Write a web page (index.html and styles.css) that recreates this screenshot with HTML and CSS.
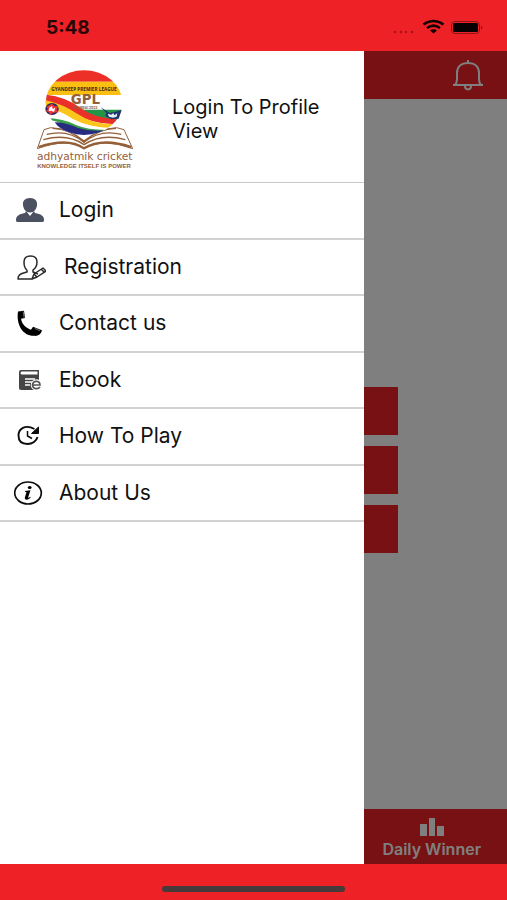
FILE: index.html
```html
<!DOCTYPE html>
<html lang="en">
<head>
<meta charset="utf-8">
<meta name="viewport" content="width=device-width, initial-scale=1">
<title>Adhyatmik Cricket</title>
<link rel="stylesheet" href="styles.css">
</head>
<body>
<div class="phone">
  <header class="status">
    <time class="clock">5:48</time>
    <svg class="status-icons" viewBox="0 0 92 20" aria-hidden="true">
      <g fill="#a01518"><circle cx="4" cy="14" r="1.2"/><circle cx="10" cy="14" r="1.2"/><circle cx="15" cy="14" r="1.2"/><circle cx="21" cy="14" r="1.2"/></g>
      <g fill="none" stroke="#120203" stroke-width="2.6"><path d="M32.500 6.500Q42.500-.5 52.500 6.500"/><path d="M36 10Q42.500 5.300 49 10"/></g>
      <path d="M39 12.500Q42.500 10 46 12.500L42.500 15.500Z" fill="#120203"/>
      <rect x="60.500" y="3.500" width="28" height="12" rx="3.500" fill="none" stroke="#8d1518"/>
      <rect x="62" y="5" width="25" height="9" rx="1.500" fill="#080101"/>
      <path d="M90 7.500v4q3-2 0-4Z" fill="#8d1518"/>
    </svg>
  </header>

  <main class="stage">
    <section class="app">
      <div class="topbar">
        <button class="bell" aria-label="Notifications">
          <svg viewBox="0 0 32 32" fill="none" stroke="#fff" stroke-width="2"><path d="M1 26H31M3 26Q5 24 5 20V14C5 8 9 4 16 4S27 8 27 14V20Q27 24 29 26M13 27c0 4.500 6 4.500 6 0M16 4V1"/></svg>
        </button>
      </div>
      <div class="choices"><div class="choice"></div><div class="choice"></div><div class="choice"></div></div>
      <nav class="tabs">
        <a class="tab" href="#winner">
          <svg viewBox="0 0 24 18" fill="#fff" aria-hidden="true"><path d="M0 6h7v12H0zM9 0h6v18H9zM17 8h7v10h-7z"/></svg>
          Daily Winner
        </a>
      </nav>
    </section>
    <div class="scrim"></div>

    <aside class="drawer">
      <div class="profile">
        <svg class="logo" viewBox="0 0 390 360" role="img" aria-label="Gyandeep Premier League">
          <defs><clipPath id="ball"><ellipse cx="192" cy="131" rx="115" ry="97"/></clipPath></defs>
          <g fill="#fff" stroke="#946039" stroke-width="4" stroke-linejoin="round">
            <path d="M92 206L72 212 52 269Q145 235 192 268Q245 235 338 269L312 212 290 206Q235 208 192 250Q150 207 92 206Z" stroke-width="3"/>
            <path d="M70 242Q142 222 192 257Q244 222 316 242M80 226Q145 210 192 250Q240 210 304 226M98 208Q150 210 192 246Q235 210 288 208" fill="none"/>
            <path d="M56 264Q145 235 192 268Q245 235 334 264" fill="none" stroke-width="7"/>
          </g>
          <g clip-path="url(#ball)">
            <path fill="#fff" d="M70 30h245v205H70z"/>
            <path fill="#ec3028" d="M70 30h245v38H70z"/>
            <path fill="#fbbf12" d="M70 68h245v40H70z"/>
            <path fill="#249447" d="M185 152h130v62Q250 211 192 158Z"/>
            <path fill="#fff" d="M170 149Q225 188 315 190V226Q220 210 145 170Z"/>
            <path fill="#e9302b" d="M72 106Q140 113 183 148Q233 185 315 180V195Q220 199 165 164Q125 139 72 130Z"/>
            <path fill="#fbc51b" d="M72 122Q129 134 173 165Q227 203 315 194V207Q222 213 159 181Q118 157 72 147Z"/>
            <path fill="#fff" d="M72 143Q124 155 157 179Q212 212 310 206V218Q220 221 158 194Q118 176 72 170Z"/>
            <path fill="#3b9e4a" d="M72 177Q130 177 170 199Q210 216 285 212L270 222Q180 225 132 196Q103 182 72 181Z"/>
            <path fill="#272b80" d="M104 190Q137 190 175 207Q217 220 270 213L240 235H140Z"/>
          </g>
          <g><ellipse cx="96" cy="150" rx="20" ry="18" fill="#25285f"/><path d="M79 143l17-9 9 8 9-2-4 13 7 7-17 1-9 7-6-10-9-1 8-6z" fill="#ea3439"/><path d="M88 146l8-5 2 9 8-4-4 13-8-4-8 2z" fill="#fff"/></g>
          <path d="M241 144l28 18 24-5 12-4-9 26-22 2-18-10 3-10z" fill="#20356d"/>
          <path d="M263 164l11 3 6-5 3 7 9-6-2 10-11 3-12-3z" fill="#e8eff5"/>
          <text class="league" x="192" y="95">GYANDEEP PREMIER LEAGUE</text>
          <text class="gpl" x="196" y="136">GPL</text>
          <text class="city" x="197" y="149">MUMBAI 2023</text>
          <text class="brand" x="194" y="303">adhyatmik cricket</text>
          <text class="motto" x="192" y="328">KNOWLEDGE ITSELF IS POWER</text>
        </svg>
        <a class="profile-link" href="#profile">Login To Profile View</a>
      </div>

      <nav class="menu">
        <a class="item" href="#login">
          <svg viewBox="0 0 32 32" fill="#4b5160" aria-hidden="true"><path d="M16 4c5 0 7.500 3 7 7-.3 4-3 7.500-7 7.500S9.300 15 9 11c-.5-4 2-7 7-7Z"/><path d="M12 17l4 5 4-5 1 2c6 1 9 3 9 7 0 2-1 2-2 2H4c-1 0-2 0-2-2 0-4 3-6 9-7Z"/></svg>
          Login
        </a>
        <a class="item item-wide" href="#registration">
          <svg viewBox="0 0 32 32" fill="none" stroke="#292929" stroke-width="1.500" stroke-linejoin="round" aria-hidden="true"><path d="M13 19c-3-2-3-5-3-8 0-4 2-6 6.500-6S23 7 23 11s-1 6-4 8v2l5 2M13 19v2c-6 2-9 2-9 7h14M18 28l2-5 9-6 3 3-9 6-5 2ZM20 23l3 3M27 18l3 3"/></svg>
          Registration
        </a>
        <a class="item" href="#contact">
          <svg viewBox="0 0 32 32" aria-hidden="true"><path d="M4 4.500l6-.8 1 7.300-4 .8c1 6 5 9 10 11l2-3 9 3.500c-1 4-4 6-8 5.500C9 29 2 18 4 4.500Z"/><path d="M9.200 4.600l.9 6.200M20.800 21.500l5.200 2.200" stroke="#999" stroke-width=".7"/></svg>
          Contact us
        </a>
        <a class="item" href="#ebook">
          <svg viewBox="0 0 32 32" aria-hidden="true"><path d="M7 6H25V26H7q-2 0-2-2V8q0-2 2-2Z" fill="#454545"/><path d="M7.500 7.500H23.500V10.500H7.500Q5.500 9 7.500 7.500Z" fill="#fff"/><path d="M11 15h10M11 18h7M11 21h5" stroke="#fff" stroke-width="1.300"/><circle cx="22.500" cy="21" r="5.800" fill="#fff"/><path d="M18.500 21H26C26 16.500 19.500 16 18.500 20.500c0 5 5.500 5 7.500 2.500" fill="none" stroke="#555" stroke-width="1.700"/></svg>
          Ebook
        </a>
        <a class="item" href="#how">
          <svg viewBox="0 0 32 32" fill="none" stroke="#0d0d0d" stroke-width="1.900" aria-hidden="true"><path d="M20.500 9C11 4 4.500 9 4.500 15.500S9 24 13.500 24c5 0 9-3 10-7"/><path d="M13.500 11v5l4.500 2.500" stroke-width="1.500"/><path d="M24.500 7v6.500h-7Z" fill="#0d0d0d" stroke-width="1"/></svg>
          How To Play
        </a>
        <a class="item" href="#about">
          <svg viewBox="0 0 32 32" aria-hidden="true"><ellipse cx="14" cy="16" rx="13.300" ry="11" fill="none" stroke="#0d0d0d" stroke-width="1.700"/><ellipse cx="15.700" cy="10.500" rx="1.900" ry="1.600"/><path d="M11 14l5.500-.7-2.500 7.500q1 .2 2.300-1l.5.500c-2 3-7 3.500-5.900 0l1.600-5-1.600-.5z"/></svg>
          About Us
        </a>
      </nav>
    </aside>
  </main>

  <footer class="home-area"><div class="home-bar"></div></footer>
</div>
</body>
</html>
```
FILE: styles.css
```css
* { box-sizing: border-box; }

body {
  margin: 0;
  font-family: Inter, "Open Sans", sans-serif;
  color: #111;
  background: #fff;
}

a { color: inherit; text-decoration: none; }

.phone {
  display: flex;
  flex-direction: column;
  min-height: 100vh;
}

.status {
  display: flex;
  align-items: center;
  justify-content: space-between;
  height: 51px;
  padding: 4px 24px 0 46px;
  background: #ee2226;
}

.clock {
  font-size: 19px;
  font-weight: 700;
  color: #2b0506;
}

.status-icons { width: 92px; height: 20px; }

.stage {
  position: relative;
  display: flex;
  flex: 1;
}

.app {
  display: flex;
  flex: 1;
  flex-direction: column;
}

.topbar {
  display: flex;
  align-items: center;
  justify-content: flex-end;
  height: 48px;
  padding-right: 23px;
  background: #ee2226;
}

.bell {
  width: 32px;
  height: 32px;
  padding: 0;
  border: 0;
  background: none;
}

.bell svg { display: block; }

.choices {
  display: flex;
  flex: 1;
  flex-direction: column;
  align-items: center;
  justify-content: center;
  gap: 11px;
  padding-top: 32px;
}

.choice {
  width: 57%;
  height: 48px;
  background: #ee2226;
}

.tabs {
  display: flex;
  justify-content: flex-end;
  height: 55px;
  padding: 9px 26px 0;
  background: #ee2226;
}

.tab {
  display: flex;
  flex-direction: column;
  align-items: center;
  gap: 4px;
  color: #fff;
  font-size: 16px;
  font-weight: 600;
  line-height: 18px;
}

.tab svg { width: 24px; height: 18px; }

.scrim {
  position: absolute;
  inset: 0;
  background: rgb(0 0 0 / 50%);
}

.drawer {
  position: absolute;
  inset: 0 28% 0 0;
  margin-right: 1px;
  background: #fff;
}

.profile {
  display: flex;
  align-items: center;
  gap: 22px;
  height: 132px;
  padding: 5px 20px 0;
  border-bottom: 1px solid #c8c8c8;
}

.logo {
  flex: none;
  width: 130px;
  height: 120px;
}

.logo text {
  text-anchor: middle;
  fill: #946039;
}

.logo .league { font: 700 14px "Open Sans", sans-serif; fill: #3d2417; }
.logo .gpl { font: 700 40px "DejaVu Sans", sans-serif; }
.logo .city { font: 700 10px Inter, sans-serif; }
.logo .brand { font: 32px "DejaVu Sans", sans-serif; }
.logo .motto { font: 700 18px "Liberation Sans", sans-serif; }

.profile-link {
  font-size: 20px;
  line-height: 24px;
}

.menu {
  display: grid;
  grid-auto-rows: 1fr;
  min-height: 339px;
}

.item {
  display: flex;
  align-items: center;
  gap: 13px;
  padding-left: 14px;
  border-bottom: 2px solid #d2d2d2;
  font-size: 21px;
  line-height: 24px;
}

.item svg { width: 32px; height: 32px; }

.item-wide { gap: 18px; }

.home-area {
  display: flex;
  justify-content: center;
  height: 36px;
  padding-top: 22px;
  background: #ee2226;
}

.home-bar {
  width: 36%;
  height: 6px;
  border-radius: 3px;
  background: #463a3a;
}
```
